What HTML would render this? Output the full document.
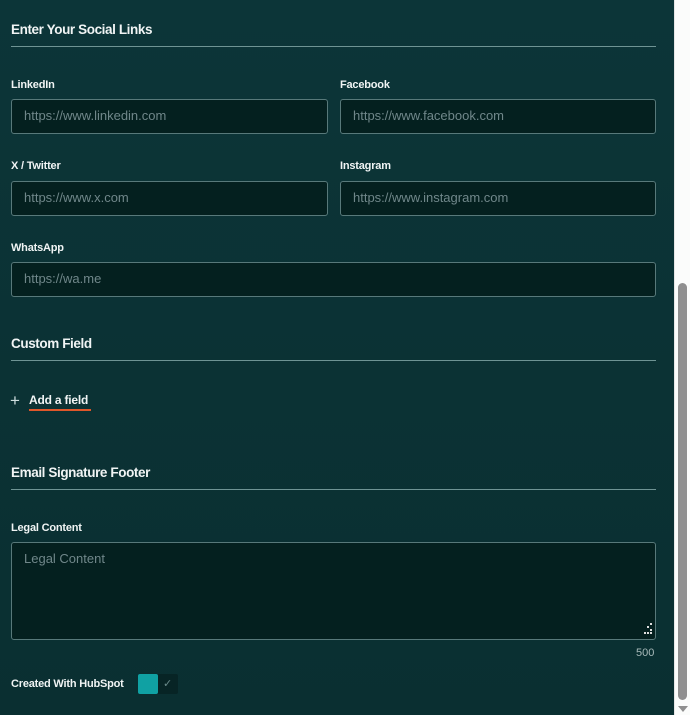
<!DOCTYPE html>
<html><head><style>
*{margin:0;padding:0;box-sizing:border-box}
body{width:690px;height:715px;overflow:hidden;background:#fff;font-family:"Liberation Sans",sans-serif;position:relative}
#main{position:absolute;left:0;top:0;width:674px;height:715px;background:linear-gradient(#0c3538,#0a2f31)}
.h{position:absolute;left:11px;color:#f0f4f4;font-size:13.5px;font-weight:bold;letter-spacing:-0.4px}
.line{position:absolute;left:11px;width:645px;height:1px;background:#6f9494}
.lbl{position:absolute;color:#f0f4f4;font-size:11px;font-weight:bold;letter-spacing:-0.2px}
.in{position:absolute;height:35px;background:#04201f;border:1px solid #58797a;border-radius:3px;color:#70878a;font-size:13px;padding:8px 12px}
#sb{position:absolute;left:674px;top:0;width:16px;height:715px;background:#fbfcfb;border-left:1px solid #e6e6e6}
.d{position:absolute;width:2px;height:2px;background:#ddd}
</style></head><body>
<div id="main">
<div class="h" style="top:22px">Enter Your Social Links</div>
<div class="line" style="top:46px"></div>
<div class="lbl" style="left:11px;top:79px">LinkedIn</div>
<div class="lbl" style="left:340px;top:79px">Facebook</div>
<div class="in" style="left:11px;top:99px;width:317px">https://www.linkedin.com</div>
<div class="in" style="left:340px;top:99px;width:316px">https://www.facebook.com</div>
<div class="lbl" style="left:11px;top:160px">X / Twitter</div>
<div class="lbl" style="left:340px;top:160px">Instagram</div>
<div class="in" style="left:11px;top:181px;width:317px">https://www.x.com</div>
<div class="in" style="left:340px;top:181px;width:316px">https://www.instagram.com</div>
<div class="lbl" style="left:11px;top:242px">WhatsApp</div>
<div class="in" style="left:11px;top:262px;width:645px">https://wa.me</div>
<div class="h" style="top:336px">Custom Field</div>
<div class="line" style="top:360px"></div>
<div style="position:absolute;left:10px;top:392px;color:#cfdede;font-size:17px;line-height:17px">+</div>
<div style="position:absolute;left:29px;top:393px;color:#f0f4f4;font-size:12px;font-weight:bold;letter-spacing:-0.2px">Add a field</div>
<div style="position:absolute;left:29px;top:409px;width:62px;height:2px;background:#e0572a"></div>
<div class="h" style="top:465px">Email Signature Footer</div>
<div class="line" style="top:489px"></div>
<div class="lbl" style="left:11px;top:522px">Legal Content</div>
<div class="in" style="left:11px;top:542px;width:645px;height:98px">Legal Content
<span class="d" style="left:635px;top:83px"></span><span class="d" style="left:638px;top:86px"></span><span class="d" style="left:638px;top:89px"></span><span class="d" style="left:635px;top:89px"></span><span class="d" style="left:632px;top:89px"></span><span class="d" style="left:638px;top:80px"></span></div>
<div style="position:absolute;left:636px;top:647px;color:#a8baba;font-size:11px">500</div>
<div class="lbl" style="left:11px;top:678px">Created With HubSpot</div>
<div style="position:absolute;left:138px;top:674px;width:40px;height:20px;background:#072425;border-radius:2px"></div>
<div style="position:absolute;left:138px;top:674px;width:20px;height:20px;background:#10a1a3;border-radius:2px"></div>
<div style="position:absolute;left:163px;top:677px;color:#6a8a8a;font-size:11px">✓</div>
</div>
<div id="sb">
<div style="position:absolute;left:3px;top:283px;width:9px;height:417px;background:#8f8f8f;border-radius:5px"></div>
<div style="position:absolute;left:3px;top:706px;width:0;height:0;border-left:5px solid transparent;border-right:5px solid transparent;border-top:6px solid #8f8f8f"></div>
</div>
</body></html>
